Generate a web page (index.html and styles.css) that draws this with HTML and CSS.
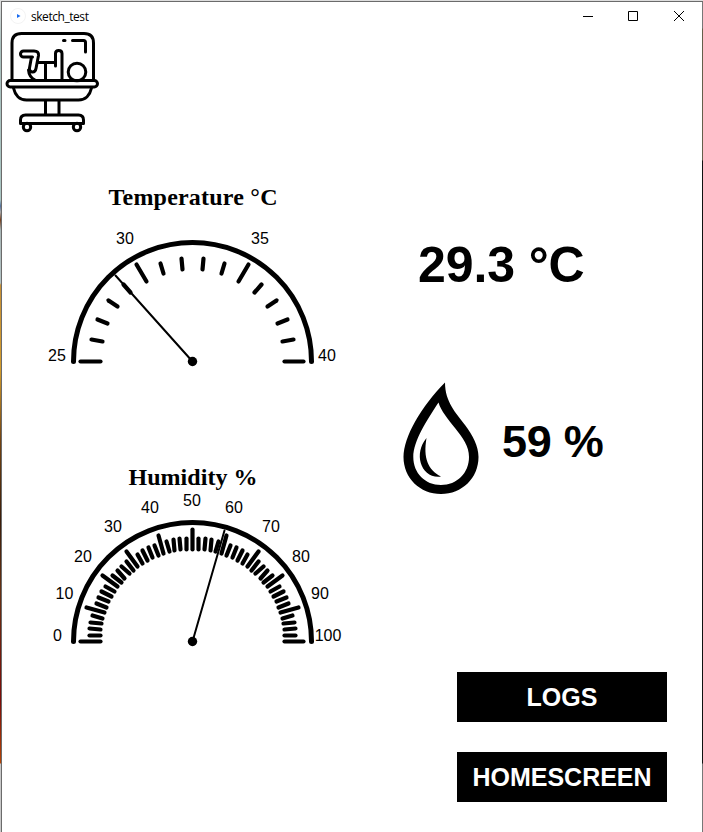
FILE: index.html
```html
<!DOCTYPE html>
<html lang="en">
<head>
<meta charset="utf-8">
<title>sketch_test</title>
<link rel="stylesheet" href="styles.css">
</head>
<body>
<div class="window">
  <header class="titlebar">
    <svg class="app-icon" width="16" height="16" viewBox="0 0 16 16"><circle cx="8" cy="8" r="7.5" fill="#fff" stroke="#f3f3f3"/><path d="M7 6l3.5 2L7 10z" fill="#1a6cf0"/></svg>
    <span class="app-name">sketch_test</span>
    <svg class="controls" width="110" height="20" viewBox="0 0 110 20" fill="none" stroke="#000">
      <path d="M3 10.5h10"/>
      <path d="M48.5 5.5h9v9h-9z"/>
      <path d="M94 5l10 10M104 5L94 15"/>
    </svg>
  </header>
  <main class="content">
    <section class="gauges">
      <svg class="incubator" width="98" height="104" viewBox="4 30 98 104" fill="none" stroke="#000" stroke-width="3" stroke-linecap="round" stroke-linejoin="round">
        <path d="M12 80V43q0-9.500 9.500-9.500h62.500q9.500 0 9.500 9.500v37"/>
        <rect x="7" y="80.500" width="90.500" height="6.500" rx="3.200"/>
        <path d="M13.500 88c1.500 7 6 12 13 12h52c7 0 11.500-5 13-12"/>
        <path d="M45.500 101v13M59 101v13"/>
        <path d="M20.500 123.500v-3.500q0-5 5-5h53q5 0 5 5v3.500z"/>
        <circle cx="27" cy="127" r="3.700"/><circle cx="77" cy="127" r="3.700"/>
        <circle cx="77" cy="72" r="8.800"/>
        <path d="M63.500 40.500h1.500M72.500 40.500h11q2 0 2 2v9.500"/>
        <path d="M32.500 57h-9a3 3 0 0 1 0-6h10.500q5 0 4.500 4.500l-2.500 13q-.8 4-4 3.500-3-.5-2.500-4l2-11M28.500 70q.5 7 6.500 10M38 62.500h17M45.500 62.500v17.500M55.500 66V53.500q0-3 3.200-3t3.300 3V80"/>
      </svg>
      <svg class="gauge" data-min="25" data-max="40" data-step="1" data-major="5" data-value="29" width="340" height="280" viewBox="2 134 340 280">
        <text class="gauge-title" x="193" y="205" textLength="169">Temperature °C</text>
        <g class="dial" transform="translate(192.5 361.500)"></g>
        <text x="57" y="361">25</text><text x="125" y="244">30</text><text x="260" y="244">35</text><text x="327" y="361">40</text>
      </svg>
      <svg class="gauge" data-min="0" data-max="100" data-step="2" data-major="10" data-value="59" width="340" height="280" viewBox="2 414 340 280">
        <text class="gauge-title" x="193" y="485" textLength="129">Humidity %</text>
        <g class="dial" transform="translate(192.5 641.500)"></g>
        <text x="57.500" y="641">0</text><text x="64.500" y="599">10</text><text x="83" y="562">20</text><text x="113" y="532">30</text><text x="150" y="513">40</text><text x="192" y="506">50</text><text x="234" y="513">60</text><text x="271" y="532">70</text><text x="301" y="562">80</text><text x="320" y="599">90</text><text x="328" y="641">100</text>
      </svg>
    </section>
    <section class="readings">
      <div class="temperature">29.3 °C</div>
      <div class="humidity">
        <svg width="76" height="114" viewBox="403 381 76 114">
          <path fill-rule="evenodd" d="M445 382.500C445 402 456 413 465 425C473 436 478.500 446 478.500 457C478.500 478 462 494 441 494C420 494 403.500 478 403.500 457C403.500 447 408 434 415 421.700C423 408 434 393 445 382.500ZM438.500 402.500C441 411 448 419 455 428C463 438 469 446 469 457C469 473 457 485 441 485C425 485 413.300 473 413.300 457C413.300 441 427 420 438.500 402.500Z"/>
          <path d="M426.500 438C423 458 428 470 441 476.500C421 479 413 454 426.500 438Z"/>
        </svg>
        <span>59 %</span>
      </div>
      <nav class="actions"><button>LOGS</button><button>HOMESCREEN</button></nav>
    </section>
  </main>
</div>
<script src="gauge.js"></script>
</body>
</html>
```
FILE: styles.css
```css
* { box-sizing: border-box; }
html { height: 100%; }
body {
  margin: 0;
  height: 832px;
  padding: 1px 0 0 1px;
  overflow: hidden;
  font-family: "Liberation Sans", Arial, sans-serif;
  color: #000;
  background: linear-gradient(#ddd 0, #ddd 1px, #a9bfbd 44px, #a9c5c2 200px, #53719c 206px, #aaa 212px, #753e1d 220px, #a8b5b5 230px, #b3c3c4 283px, #c79036 285px, #d39b2a 370px, #734310 440px, #3a1c08 520px, #653012 590px, #7c0b07 700px, #b54405 763px, #c8c8c8 764px);
}
.window {
  height: 840px;
  border: 1px solid #6b6b6b;
  border-right: 0;
  background: linear-gradient(#777 26px, #655f4b 27px, #655f4b 158px, #111 159px, #111 761px, #777 762px) right top / 1px 100% no-repeat, #fff;
}
.titlebar {
  display: flex;
  align-items: center;
  height: 28px;
  padding: 0 13px 0 8px;
}
.app-icon { flex: none; }
.app-name {
  margin-left: 5px;
  font: 12px "Open Sans", "Noto Sans", sans-serif;
  letter-spacing: -0.45px;
}
.controls { margin-left: auto; }
.content { display: flex; }
.gauges { width: 340px; display: flex; flex-direction: column; }
.incubator { margin-left: 2px; }
.gauge text { font-size: 16px; text-anchor: middle; }
.gauge .gauge-title { font: bold 24px "Liberation Serif", "Times New Roman", serif; }
.dial { fill: none; stroke: #000; stroke-linecap: round; }
.arc { stroke-width: 5; }
.tick { stroke-width: 4.200; }
.needle { stroke-width: 2; }
.hub { fill: #000; stroke: none; }
.readings { flex: 1; font-weight: bold; padding-top: 205px; }
.temperature {
  height: 60px;
  margin-left: 76px;
  font-size: 50px;
  line-height: 60px;
  letter-spacing: -0.1px;
  white-space: nowrap;
}
.humidity {
  display: flex;
  align-items: center;
  gap: 23px;
  margin: 86px 0 0 61px;
  height: 114px;
  font-size: 45px;
  line-height: 52px;
  letter-spacing: -0.3px;
}
.humidity span { padding-top: 7px; white-space: nowrap; }
.actions {
  display: flex;
  flex-direction: column;
  align-items: flex-end;
  gap: 30px;
  margin: 177px 36px 0 0;
}
button {
  width: 210px;
  height: 50px;
  padding: 0;
  border: 0;
  background: #000;
  color: #fff;
  font: bold 25px "Liberation Sans", Arial, sans-serif;
}
```
FILE: gauge.js
```js
const SVG_NS = "http://www.w3.org/2000/svg";

function draw(parent, name, attributes) {
  const el = document.createElementNS(SVG_NS, name);
  for (const key in attributes) el.setAttribute(key, attributes[key]);
  parent.appendChild(el);
}

// Rounds away from zero, ignoring floating point noise.
const outward = (n) => Math.sign(n) * Math.ceil(Math.abs(n) - 0.01);

document.querySelectorAll(".gauge").forEach((gauge) => {
  const min = +gauge.dataset.min;
  const max = +gauge.dataset.max;
  const step = +gauge.dataset.step;
  const major = +gauge.dataset.major;
  const dial = gauge.querySelector(".dial");
  const point = (value, radius, round) => {
    const angle = ((value - min) / (max - min)) * Math.PI;
    return [-round(radius * Math.cos(angle)), -round(radius * Math.sin(angle))];
  };

  draw(dial, "path", { class: "arc", d: "M-119 0A119 119 0 0 1 119 0" });
  for (let v = min; v <= max; v += step) {
    const outer = (v - min) % major === 0 ? 111.5 : 103.5;
    draw(dial, "path", { class: "tick", d: `M${point(v, outer, Math.round)}L${point(v, 92, outward)}` });
  }
  draw(dial, "path", { class: "needle", d: `M0 0L${point(+gauge.dataset.value, 116, Math.trunc)}` });
  draw(dial, "circle", { class: "hub", r: 4.7 });
});
```
